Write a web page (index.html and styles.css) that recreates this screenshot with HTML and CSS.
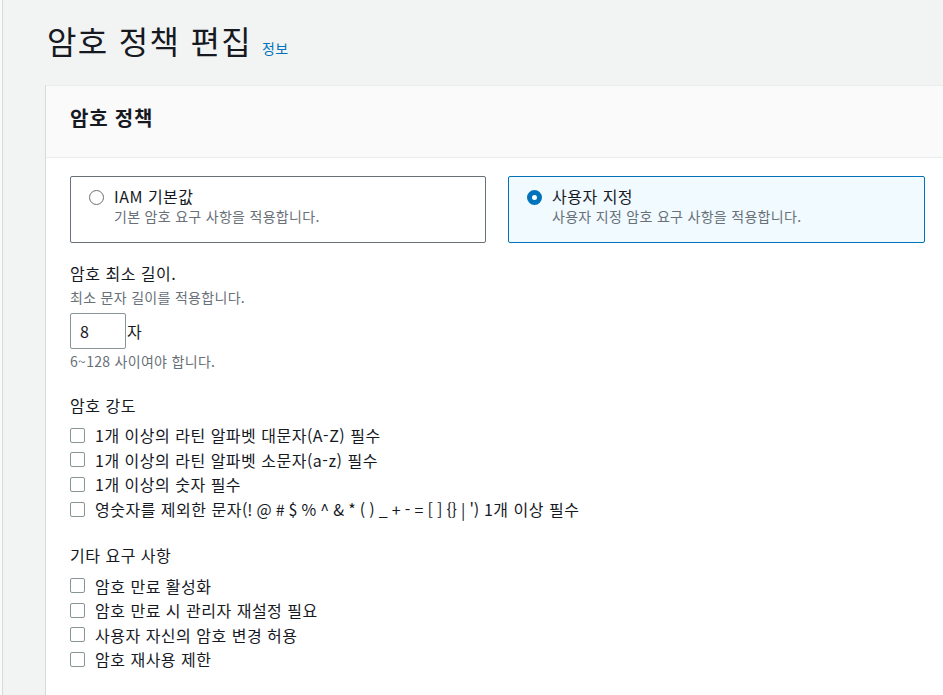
FILE: index.html
```html
<!DOCTYPE html>
<html lang="ko">
<head>
<meta charset="utf-8">
<title>암호 정책 편집</title>
<link rel="stylesheet" href="styles.css">
</head>
<body>
<div class="app">
  <div class="content">
    <h1 class="title"><span class="title-text">암호 정책 편집</span><a class="info" href="#">정보</a></h1>
    <section class="panel">
      <header class="panel-header"><h2>암호 정책</h2></header>
      <div class="panel-body">
        <div class="cards">
          <label class="card">
            <span class="radio"></span>
            <span class="card-text">
              <span class="card-label">IAM 기본값</span>
              <span class="card-desc">기본 암호 요구 사항을 적용합니다.</span>
            </span>
          </label>
          <label class="card card-selected">
            <span class="radio radio-on"></span>
            <span class="card-text">
              <span class="card-label">사용자 지정</span>
              <span class="card-desc">사용자 지정 암호 요구 사항을 적용합니다.</span>
            </span>
          </label>
        </div>

        <div class="field">
          <div class="field-label">암호 최소 길이.</div>
          <div class="field-desc">최소 문자 길이를 적용합니다.</div>
          <div class="input-row">
            <div class="input">8</div><span class="unit">자</span>
          </div>
          <div class="field-hint">6~128 사이여야 합니다.</div>
        </div>

        <div class="group">
          <div class="group-label">암호 강도</div>
          <ul class="checks">
            <li><span class="box"></span><span>1개 이상의 라틴 알파벳 대문자(A-Z) 필수</span></li>
            <li><span class="box"></span><span>1개 이상의 라틴 알파벳 소문자(a-z) 필수</span></li>
            <li><span class="box"></span><span>1개 이상의 숫자 필수</span></li>
            <li><span class="box"></span><span>영숫자를 제외한 문자<span class="symbols">(! @ # $ % ^ &amp; * ( ) _ + - = [ ] {} | ')</span> 1개 이상 필수</span></li>
          </ul>
        </div>

        <div class="group">
          <div class="group-label">기타 요구 사항</div>
          <ul class="checks">
            <li><span class="box"></span><span>암호 만료 활성화</span></li>
            <li><span class="box"></span><span>암호 만료 시 관리자 재설정 필요</span></li>
            <li><span class="box"></span><span>사용자 자신의 암호 변경 허용</span></li>
            <li><span class="box"></span><span>암호 재사용 제한</span></li>
          </ul>
        </div>
      </div>
    </section>
  </div>
</div>
</body>
</html>
```

FILE: styles.css
```css
* { box-sizing: border-box; }
html, body {
  margin: 0;
  padding: 0;
  height: 695px;
  overflow: hidden;
  background: #fafafa;
  font-family: "Noto Sans CJK KR", "Noto Sans", sans-serif;
  color: #16191f;
}
.app {
  margin-left: 2px;
  border-left: 1px solid #d5dbdb;
  background: #f2f3f3;
  min-height: 695px;
}
.content {
  padding: 20px 0 0 42px;
}
.title {
  display: flex;
  align-items: baseline;
  gap: 10px;
  height: 40px;
  margin: 0 0 25px 0;
  padding-left: 2px;
  font-weight: 400;
}
.title-text {
  font-size: 32px;
  letter-spacing: 1.3px;
  line-height: 40px;
}
.info {
  font-size: 14px;
  letter-spacing: 0.4px;
  line-height: 20px;
  color: #0073bb;
  text-decoration: none;
}
.panel {
  width: 920px;
  background: #ffffff;
  border-top: 1px solid #eaeded;
  border-left: 1px solid #d5dbdb;
}
.panel-header {
  height: 72px;
  background: #fafafa;
  border-bottom: 1px solid #eaeded;
  padding: 20px 24px 0 24px;
}
.panel-header h2 {
  margin: 0;
  font-size: 20px;
  letter-spacing: 0.8px;
  font-weight: 700;
  line-height: 24px;
}
.panel-body {
  padding: 18px 24px 40px 24px;
}
.cards {
  display: grid;
  grid-template-columns: 416px 417px;
  column-gap: 22px;
}
.card {
  display: flex;
  align-items: flex-start;
  gap: 10px;
  height: 67px;
  border: 1px solid #687078;
  border-radius: 2px;
  padding: 9px 18px 0 18px;
}
.card-selected {
  border-color: #0073bb;
  background: #f1faff;
}
.radio {
  flex: none;
  width: 15px;
  height: 15px;
  margin-top: 4px;
  border-radius: 50%;
  border: 1.5px solid #687078;
  background: #fff;
}
.radio-on {
  border: 5px solid #0073bb;
}
.card-text {
  display: flex;
  flex-direction: column;
  gap: 0;
}
.card-label,
.field-label,
.group-label,
.unit,
.checks li {
  font-size: 16px;
  letter-spacing: 0.5px;
}
.card-label {
  line-height: 21px;
}
.card-desc,
.field-desc,
.field-hint {
  font-size: 14px;
  letter-spacing: 0.3px;
  line-height: 19px;
  color: #687078;
}
.field {
  margin-top: 20px;
}
.field-label {
  line-height: 20px;
}
.field-desc {
  margin-top: 5px;
}
.input-row {
  margin-top: 6px;
  display: flex;
  align-items: center;
}
.input {
  width: 56px;
  height: 36px;
  border: 1px solid #879596;
  border-radius: 2px;
  padding-left: 9px;
  font-size: 16px;
  line-height: 34px;
  background: #fff;
}
.unit {
  margin-left: 1px;
}
.field-hint {
  margin-top: 3px;
}
.group {
  margin-top: 24px;
}
.group-label {
  line-height: 20px;
}
.checks {
  list-style: none;
  margin: 8px 0 0 0;
  padding: 0;
}
.checks li {
  display: flex;
  align-items: center;
  height: 24.6px;
}
.symbols {
  letter-spacing: -0.2px;
}
.box {
  flex: none;
  width: 15px;
  height: 15px;
  border: 1.5px solid #879596;
  border-radius: 2px;
  margin-right: 10px;
  background: #fff;
}
```
